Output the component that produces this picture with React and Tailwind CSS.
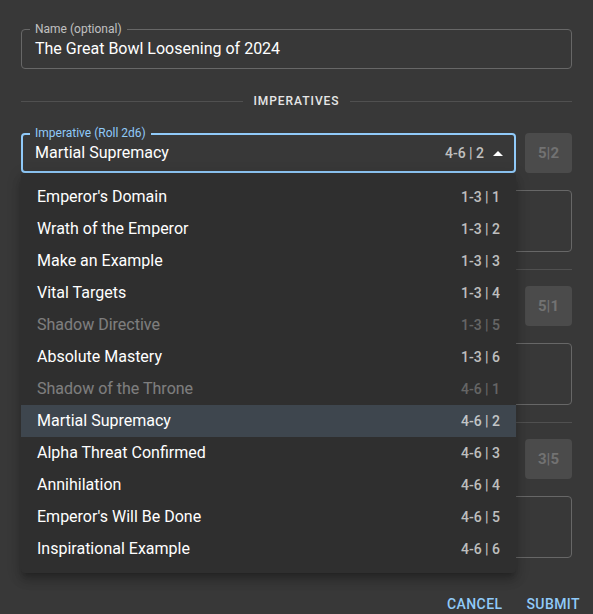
import React from "react";

const options = [
  { label: "Emperor's Domain", roll: "1-3 | 1" },
  { label: "Wrath of the Emperor", roll: "1-3 | 2" },
  { label: "Make an Example", roll: "1-3 | 3" },
  { label: "Vital Targets", roll: "1-3 | 4" },
  { label: "Shadow Directive", roll: "1-3 | 5", disabled: true },
  { label: "Absolute Mastery", roll: "1-3 | 6" },
  { label: "Shadow of the Throne", roll: "4-6 | 1", disabled: true },
  { label: "Martial Supremacy", roll: "4-6 | 2", selected: true },
  { label: "Alpha Threat Confirmed", roll: "4-6 | 3" },
  { label: "Annihilation", roll: "4-6 | 4" },
  { label: "Emperor's Will Be Done", roll: "4-6 | 5" },
  { label: "Inspirational Example", roll: "4-6 | 6" },
];

const sections = [
  { roll: "5|2", open: true },
  { roll: "5|1" },
  { roll: "3|5", last: true },
];

function RollButton({ value }) {
  return (
    <div className="w-[47px] h-[40px] shrink-0 rounded-[4px] bg-[#4b4b4b] flex items-center justify-center text-[15px] font-bold text-[#727272]">
      {value}
    </div>
  );
}

function ImperativeMenu() {
  return (
    <div className="absolute -left-[2px] top-[38px] z-10 w-[495px] py-2 rounded-[4px] bg-[#2f2f2f] shadow-[0_5px_5px_-3px_rgba(0,0,0,0.2),0_8px_10px_1px_rgba(0,0,0,0.14),0_3px_14px_2px_rgba(0,0,0,0.12)]">
      {options.map((o) => (
        <div
          key={o.label}
          className={
            "h-8 px-4 flex items-center justify-between " +
            (o.selected ? "bg-[#3e464e] " : "") +
            (o.disabled ? "opacity-[0.38]" : "")
          }
        >
          <span className="text-[16px] text-white">{o.label}</span>
          <span className="text-[14px] font-medium text-white/70 whitespace-pre">{o.roll}</span>
        </div>
      ))}
    </div>
  );
}

function Section({ roll, open, last }) {
  return (
    <div>
      <div className="relative flex gap-[9px]">
        {open ? (
          <div className="relative flex-1 h-[40px] rounded-[4px] border-2 border-[#90caf9] flex items-center pl-[12px] pr-[11px]">
            <span className="absolute -top-[8px] left-[7px] px-[5px] bg-[#383838] text-[12px] leading-[12px] text-[#90caf9]">
              Imperative (Roll 2d6)
            </span>
            <span className="flex-1 text-[16px] text-white">Martial Supremacy</span>
            <span className="text-[14px] font-medium text-white/70 whitespace-pre">4-6 | 2</span>
            <svg className="ml-[9px]" width="10" height="5" viewBox="0 0 10 5">
              <path d="M0 5 5 0 10 5z" fill="#fff" />
            </svg>
            <ImperativeMenu />
          </div>
        ) : (
          <div className="flex-1 h-[40px] rounded-[4px] border border-[#676767]" />
        )}
        <RollButton value={roll} />
      </div>
      <div className="mt-[17px] h-[62px] rounded-[4px] border border-[#676767]" />
      {!last && <div className="mt-[17px] mb-[16px] h-px bg-[#505050]" />}
    </div>
  );
}

export default function App() {
  return (
    <div className="h-screen overflow-hidden bg-[#383838] text-white font-['Roboto',sans-serif]">
      <div className="px-[21px] pt-[29px]">
        <div className="relative h-[40px] rounded-[4px] border border-[#676767] flex items-center pl-[13px]">
          <span className="absolute -top-[7px] left-[8px] px-[5px] bg-[#383838] text-[12px] leading-[12px] text-white/70">
            Name (optional)
          </span>
          <span className="text-[16px] text-white">The Great Bowl Loosening of 2024</span>
        </div>

        <div className="mt-[22px] h-[20px] flex items-center gap-[10px]">
          <div className="flex-1 h-px bg-[#505050]" />
          <span className="text-[12px] font-medium tracking-[0.08em] text-[#e6e6e6]">IMPERATIVES</span>
          <div className="flex-1 h-px bg-[#505050]" />
        </div>

        <div className="mt-[22px]">
          {sections.map((s) => (
            <Section key={s.roll} {...s} />
          ))}
        </div>
      </div>

      <div className="mt-[28px] h-[36px] flex items-center justify-end gap-2 pr-[5px]">
        <button className="px-2 text-[14px] font-medium tracking-[0.03em] text-[#90caf9]">CANCEL</button>
        <button className="px-2 text-[14px] font-medium tracking-[0.03em] text-[#90caf9]">SUBMIT</button>
      </div>
    </div>
  );
}
